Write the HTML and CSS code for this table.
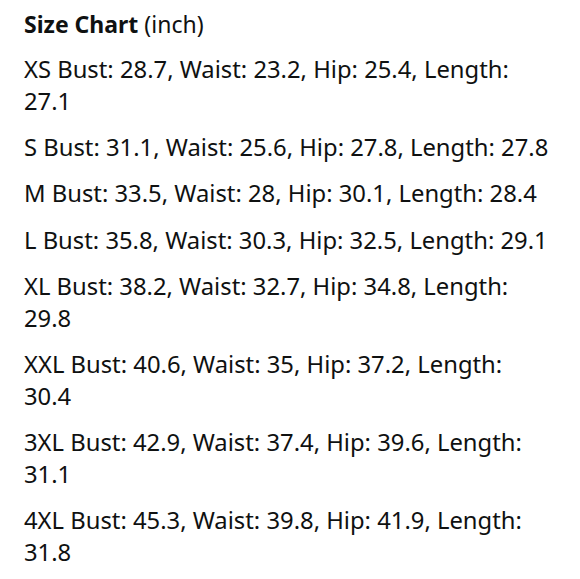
FILE: index.html
```html
<!DOCTYPE html>
<html>
<head>
<meta charset="utf-8">
<link rel="stylesheet" href="styles.css">
</head>
<body>
<div class="chart">
  <h2 class="title"><span class="bold">Size Chart</span> (inch)</h2>
  <p class="row">XS Bust: 28.7, Waist: 23.2, Hip: 25.4, Length: 27.1</p>
  <p class="row">S Bust: 31.1, Waist: 25.6, Hip: 27.8, Length: 27.8</p>
  <p class="row">M Bust: 33.5, Waist: 28, Hip: 30.1, Length: 28.4</p>
  <p class="row">L Bust: 35.8, Waist: 30.3, Hip: 32.5, Length: 29.1</p>
  <p class="row">XL Bust: 38.2, Waist: 32.7, Hip: 34.8, Length: 29.8</p>
  <p class="row">XXL Bust: 40.6, Waist: 35, Hip: 37.2, Length: 30.4</p>
  <p class="row">3XL Bust: 42.9, Waist: 37.4, Hip: 39.6, Length: 31.1</p>
  <p class="row">4XL Bust: 45.3, Waist: 39.8, Hip: 41.9, Length: 31.8</p>
</div>
</body>
</html>
```
FILE: styles.css
```css
html, body {
  margin: 0;
  padding: 0;
  background: #ffffff;
}
.chart {
  width: 528px;
  padding: 8px 28px 0 24px;
  font-family: "Noto Sans", "Open Sans", sans-serif;
  font-size: 23.8px;
  line-height: 32px;
  color: #0f1111;
}
.title {
  margin: 0 0 13px 0;
  font-size: 23px;
  font-weight: 400;
  line-height: 32px;
}
.bold {
  font-weight: 700;
}
.row {
  margin: 0 0 14.2px 0;
}
```
